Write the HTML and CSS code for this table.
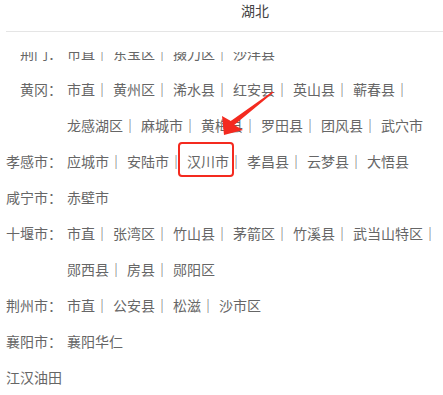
FILE: index.html
```html
<!DOCTYPE html>
<html lang="zh-CN">
<head>
<meta charset="utf-8">
<title>湖北</title>
<link rel="stylesheet" href="styles.css">
</head>
<body>
<div class="panel">
  <div class="head">
    <span></span>
    <h1 class="title">湖北</h1>
  </div>
  <div class="viewport">
    <dl class="areas">
      <dt>荆门：</dt>
      <dd><ul class="list"><li>市直</li><li>东宝区</li><li>掇刀区</li><li>沙洋县</li></ul></dd>

      <dt>黄冈：</dt>
      <dd><ul class="list"><li>市直</li><li>黄州区</li><li>浠水县</li><li>红安县</li><li>英山县</li><li>蕲春县</li><li>龙感湖区</li><li>麻城市</li><li>黄梅县</li><li>罗田县</li><li>团风县</li><li>武穴市</li></ul></dd>

      <dt>孝感市：</dt>
      <dd><ul class="list"><li>应城市</li><li>安陆市</li><li><span class="hl">汉川市<svg class="arrow" viewBox="0 0 65 55" width="65" height="55"><polygon points="58.5,8.6 19.2,40.9 28,46 9,51 7,32 15.8,37.1 57.5,7.4" fill="#f42a1f"/></svg></span></li><li>孝昌县</li><li>云梦县</li><li>大悟县</li></ul></dd>

      <dt>咸宁市：</dt>
      <dd><ul class="list"><li>赤壁市</li></ul></dd>

      <dt>十堰市：</dt>
      <dd><ul class="list"><li>市直</li><li>张湾区</li><li>竹山县</li><li>茅箭区</li><li>竹溪县</li><li>武当山特区</li><li>郧西县</li><li>房县</li><li>郧阳区</li></ul></dd>

      <dt>荆州市：</dt>
      <dd><ul class="list"><li>市直</li><li>公安县</li><li>松滋</li><li>沙市区</li></ul></dd>

      <dt>襄阳市：</dt>
      <dd><ul class="list"><li>襄阳华仁</li></ul></dd>

      <dt class="solo">江汉油田</dt>
    </dl>
  </div>
</div>
</body>
</html>
```
FILE: styles.css
```css
html, body {
  margin: 0;
  padding: 0;
  background: #fff;
}

body {
  width: 443px;
  height: 395px;
  overflow: hidden;
  font-family: "Noto Sans CJK SC", "Noto Sans", sans-serif;
  font-size: 14px;
  color: #666;
}

.panel {
  padding-left: 6px;
}

.head {
  display: grid;
  grid-template-columns: 56px 1fr;
  column-gap: 5px;
  padding-bottom: 10px;
  border-bottom: 1px solid #e5e5e5;
}

.title {
  margin: 0;
  font-size: 14px;
  font-weight: normal;
  line-height: 21px;
  color: #444;
  text-align: center;
}

.viewport {
  margin-top: 20px;
  height: 343px;
  overflow: hidden;
}

.areas {
  margin: -17px 0 0 0;
  display: grid;
  grid-template-columns: 56px 1fr;
  column-gap: 5px;
  line-height: 36px;
}

.areas dt {
  text-align: right;
  white-space: nowrap;
}

.areas dt.solo {
  grid-column: 1 / -1;
  text-align: left;
}

.areas dd {
  margin: 0;
}

.list {
  list-style: none;
  margin: 0;
  padding: 0;
  display: flex;
  flex-wrap: wrap;
}

.list li {
  white-space: nowrap;
  margin-right: 4px;
}

.list li:not(:last-child)::after {
  content: "｜";
}

.hl {
  position: relative;
}

/* red frame drawn round the marked county */
.hl::before {
  content: "";
  position: absolute;
  left: -9px;
  right: -5px;
  top: -9px;
  bottom: -6px;
  border: 2.5px solid #f42a1f;
  border-radius: 4px;
}

.arrow {
  position: absolute;
  left: 28px;
  top: -67px;
  display: block;
}
```
